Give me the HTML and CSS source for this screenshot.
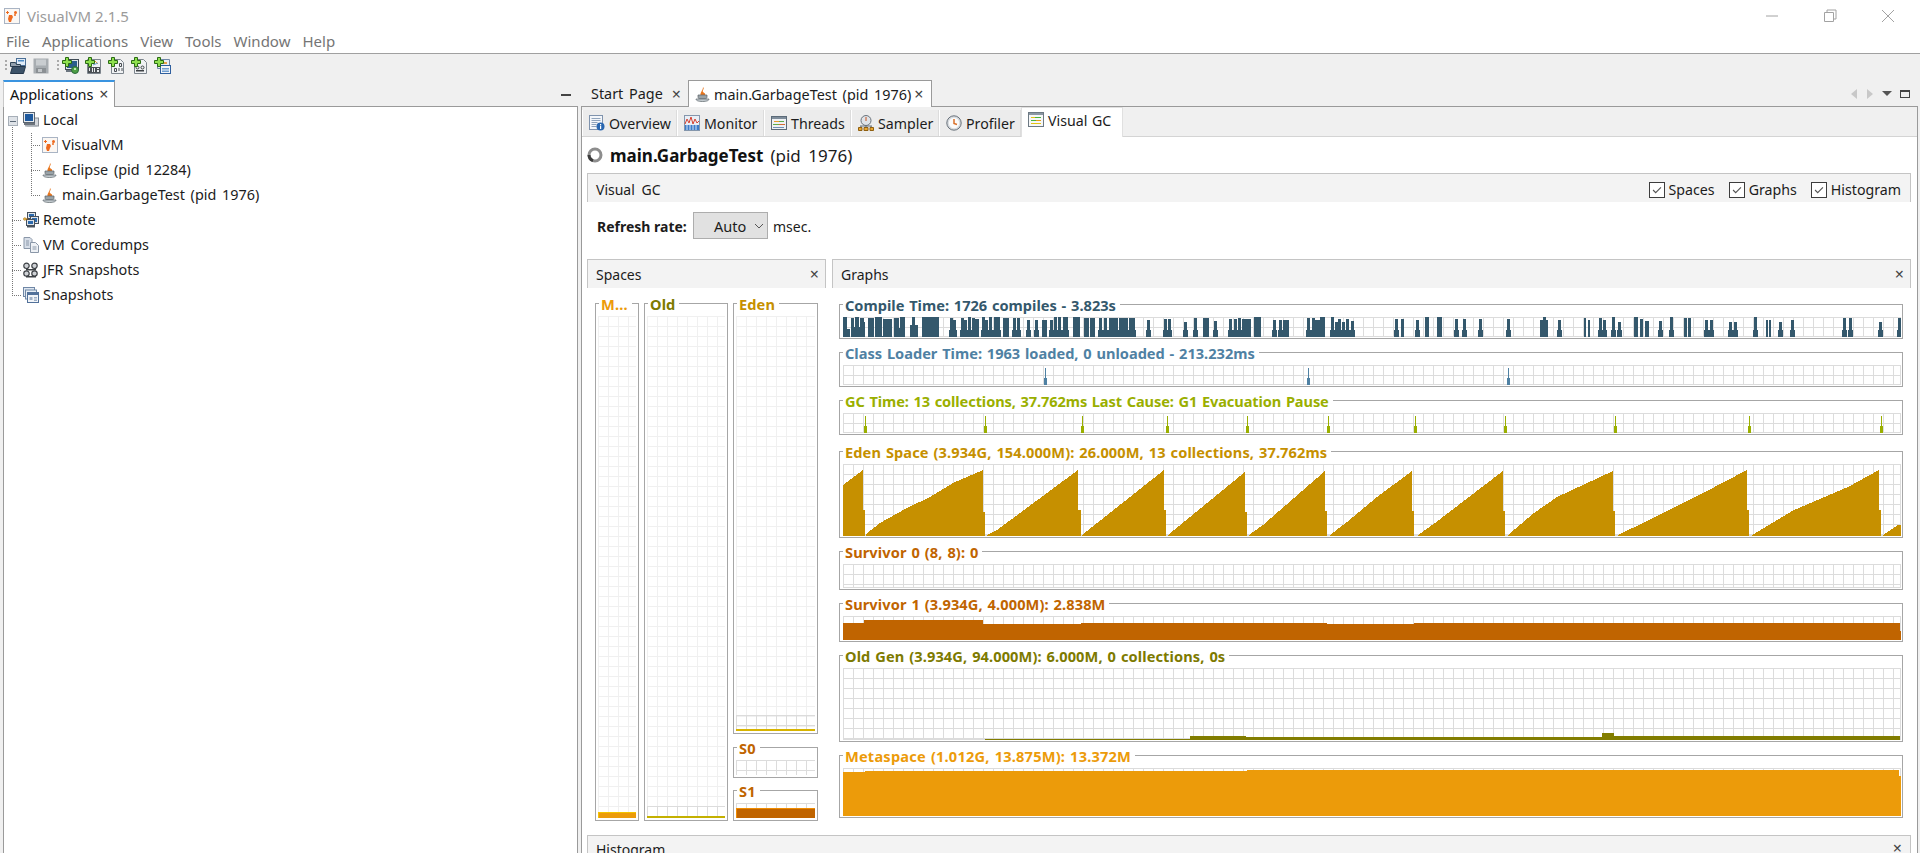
FILE: index.html
```html
<!DOCTYPE html>
<html lang="en">
<head>
<meta charset="utf-8">
<title>VisualVM 2.1.5</title>
<link rel="stylesheet" href="styles.css">
</head>
<body>
<svg class="defs" width="0" height="0" aria-hidden="true">
  <symbol id="logo" viewBox="0 0 16 16">
    <rect x=".5" y=".5" width="15" height="15" fill="#fbf7f3" stroke="#a9b4c4"/>
    <path fill="#ee6a1f" d="M5 7h3l1 2-1 2-1 3H5l-1-3zM10 4.500a1.500 1.500 0 1 1 3 0 1.500 1.500 0 0 1-3 0zM10 7a1 1 0 1 1 2 0 1 1 0 0 1-2 0zM3 3h1v1h1v1H4v1H3V5H2V4h1z"/>
  </symbol>
  <symbol id="cup" viewBox="0 0 16 16">
    <path fill="#e8761e" d="M8 1c2 2-1 3 0 5 1 1 3 1 2 4H6C4 7 8 5 8 1z"/>
    <path fill="#9aa3a8" stroke="#5d666c" stroke-width=".7" d="M3 9h9v2c0 1-1 2-2 2H5c-1 0-2-1-2-2z"/>
    <path fill="#c4cbd0" stroke="#5d666c" stroke-width=".7" d="M1 13h13c0 1.500-2 2.500-6.500 2.500S1 14.500 1 13z"/>
  </symbol>
  <symbol id="computer" viewBox="0 0 16 16">
    <rect x="4" y="6" width="11.500" height="8" fill="#d5d8dc" stroke="#8a8f96"/>
    <rect x=".5" y=".5" width="11" height="10" fill="#e6eaee" stroke="#5a6470"/>
    <rect x="2" y="2" width="8" height="7" fill="#1f5a9e"/>
    <path fill="#6d747c" d="M1 11h11v2H1z"/>
    <path fill="#a9afb6" d="M2 13h12v1.500H2z"/>
  </symbol>
  <symbol id="remote" viewBox="0 0 16 16">
    <rect x="4.500" y=".5" width="8" height="6" fill="#dfe4e9" stroke="#45505c"/>
    <rect x="6" y="2" width="5" height="3" fill="#2c6aae"/>
    <rect x="7.500" y="4.500" width="8" height="7" fill="#dfe4e9" stroke="#45505c"/>
    <rect x="9" y="6" width="5" height="4" fill="#2c6aae"/>
    <rect x="3.500" y="7.500" width="8" height="6" fill="#dfe4e9" stroke="#45505c"/>
    <rect x="5" y="9" width="5" height="3" fill="#2c6aae"/>
    <path fill="#4a545e" d="M4 14h8v1.500H4z"/>
    <circle cx="1.800" cy="7" r="1.300" fill="#f1c24c" stroke="#a56b12" stroke-width=".6"/>
    <path stroke="#a56b12" d="M3 7h2" fill="none"/>
  </symbol>
  <symbol id="dump" viewBox="0 0 16 16">
    <path fill="#d7dee8" stroke="#8a97a8" d="M1 .5h6l2 2v9H1z"/>
    <path fill="#eef1f5" stroke="#8a97a8" d="M7.500 5.500h5l3 3v7h-8z"/>
    <path stroke="#8a97a8" fill="none" d="M3 4h3M3 6h3M3 8h3M9.500 10h4M9.500 12h4"/>
  </symbol>
  <symbol id="jfr" viewBox="0 0 16 16">
    <g fill="#cfd2d6" stroke="#3d4145" stroke-width="1.200">
      <circle cx="3.500" cy="3.800" r="2.700"/><circle cx="11.500" cy="3.800" r="2.700"/>
      <circle cx="3.500" cy="11.500" r="2.700"/><circle cx="11.500" cy="11.500" r="2.700"/>
    </g>
    <path fill="#3d4145" d="M3 7h10v1.500H3zM3 14h10v1.500H3z"/>
  </symbol>
  <symbol id="snap" viewBox="0 0 16 16">
    <rect x=".5" y=".5" width="11" height="9" fill="#dfe7f1" stroke="#6f87a6"/>
    <rect x="2.500" y="3" width="11" height="9" fill="#e8eef5" stroke="#6f87a6"/>
    <rect x="4.500" y="5.500" width="11" height="10" fill="#f2f5f9" stroke="#52719a"/>
    <path fill="#52719a" d="M5 6h10v2H5z"/>
    <path fill="#9fb0c6" d="M6.500 10h3v3h-3zM11 10h3v1.500h-3zM11 12.500h3V14h-3z"/>
  </symbol>
  <symbol id="open" viewBox="0 0 16 16">
    <rect x="6.500" y=".5" width="9" height="7" fill="#dfeaf6" stroke="#4b6f96"/>
    <path fill="#4b8ac4" d="M8 2h6v1.500H8z"/>
    <path fill="#93a0ad" stroke="#2f4456" d="M.5 4.500h5l1 2h4v2H.5z"/>
    <path fill="#3c5268" stroke="#24364a" d="M.5 15.500l2-7h13l-2 7z"/>
  </symbol>
  <symbol id="save" viewBox="0 0 16 16">
    <path fill="#a8adb1" d="M.5.500h15v15H.500z"/>
    <path fill="#c9cdd0" d="M3 1.500h10v6H3z"/>
    <path fill="#8b9094" d="M3 10h10v5H3z"/>
    <path fill="#c4c8cb" d="M5 11h4v3H5z"/>
  </symbol>
  <symbol id="plus" viewBox="0 0 16 16">
    <path fill="#8fe04e" stroke="#2a6b14" d="M3.500.5h3v3h3v3h-3v3h-3v-3H.5v-3h3z"/>
  </symbol>
  <symbol id="a-remote" viewBox="0 0 16 16">
    <rect x="2.500" y="1.500" width="13" height="10" fill="#dfe4e9" stroke="#3f4a55"/>
    <rect x="4" y="3" width="10" height="7" fill="#2b5d8c"/>
    <path fill="#6c7680" d="M3 12h12v2H3z"/>
    <circle cx="12" cy="12" r="3.500" fill="#4d9e45" stroke="#2c6a3c"/>
    <path fill="#bfe3b4" d="M11 10h2v2h-2z"/>
  </symbol>
  <symbol id="a-jmx" viewBox="0 0 16 16">
    <path fill="#f0f2f4" stroke="#7d858d" d="M1.500 1.500h13v14h-13z"/>
    <path stroke="#e89a2c" d="M9 3l3 3" fill="none"/>
    <path stroke="#6f9ed0" d="M7 7l5-2" fill="none"/>
    <path fill="#4a4f54" d="M2 9h12v6H2z"/>
    <path fill="#e9ebed" d="M3 10h1v3H3zM6 10h1v4H6zM8 10h1v4H8zM11 10h2v1h-2zM11 12h2v2h-2z"/>
  </symbol>
  <symbol id="a-bin" viewBox="0 0 16 16">
    <path fill="#f0f2f4" stroke="#7d858d" d="M2.500 1.500h9l3 3v11h-12z"/>
    <path fill="none" stroke="#4a4f54" d="M10.500 5.500h2v3h-2zM13 10v3M5.500 10.500h2v3h-2zM10 10v3"/>
  </symbol>
  <symbol id="a-jfr" viewBox="0 0 16 16">
    <path fill="#f0f2f4" stroke="#7d858d" d="M2.500 1.500h9l3 3v11h-12z"/>
    <g fill="none" stroke="#3d4145"><circle cx="5.500" cy="9.500" r="1.500"/><circle cx="10.500" cy="9.500" r="1.500"/></g>
    <path fill="#3d4145" d="M4 12h8v1.500H4z"/>
  </symbol>
  <symbol id="a-snap" viewBox="0 0 16 16">
    <path fill="#e8eef5" stroke="#6f87a6" d="M2.500 1.500h12v9h-12z"/>
    <path fill="#e8a04a" d="M9 4h3v2H9z"/>
    <rect x="5.500" y="7.500" width="10" height="8" fill="#f2f5f9" stroke="#2f5f9e"/>
    <path fill="#6f9ed0" d="M7 10h7v1.500H7zM7 12.500h7V14H7z"/>
  </symbol>
  <symbol id="overview" viewBox="0 0 16 16">
    <rect x=".5" y=".5" width="13" height="14" fill="#f3f6fa" stroke="#7f93ad"/>
    <path stroke="#8fa3bb" d="M2.500 3.500h9M2.500 5.500h9M2.500 7.500h6M2.500 9.500h5M2.500 11.500h5" fill="none"/>
    <circle cx="11.500" cy="11.500" r="4" fill="#2a67b0"/>
    <path fill="#fff" d="M11 9h1.200v1.200H11zM11 10.800h1.200V14H11z"/>
  </symbol>
  <symbol id="monitor" viewBox="0 0 16 16">
    <rect x=".5" y=".5" width="15" height="15" fill="#e9eef5" stroke="#8496ac"/>
    <path fill="none" stroke="#d43f2f" d="M1 9l2-5 2 4 2-6 2 7 2-5 2 4 2-2"/>
    <path fill="#3d7cc9" d="M1 10h14v5H1z"/>
    <path stroke="#d7e5f6" d="M3 10v5M6 10v5M9 10v5M12 10v5"/>
  </symbol>
  <symbol id="threads" viewBox="0 0 16 16">
    <rect x=".5" y="1.500" width="15" height="13" fill="#eef1f4" stroke="#5b6a78"/>
    <path fill="#7e8c9a" d="M1 2h14v2H1z"/>
    <path stroke="#e89a2c" d="M3 6.500h5"/><path stroke="#5fae4b" d="M8 6.500h5M2 9.500h6"/><path stroke="#d66a34" d="M8 9.500h6"/><path stroke="#6f8fb6" d="M2 12.500h11"/>
  </symbol>
  <symbol id="sampler" viewBox="0 0 16 16">
    <circle cx="8" cy="5.500" r="5" fill="#dfe3e7" stroke="#69727b"/>
    <path stroke="#c8501f" d="M8 2v4"/>
    <path fill="none" stroke="#69727b" d="M3 11v1M8 10v2M13 11v1M2 11h12"/>
    <path fill="#e9a62f" stroke="#8f5f10" d="M.5 12.500h3.500v3H.5zM6 12.500h4v3H6zM12 12.500h3.500v3H12z"/>
  </symbol>
  <symbol id="profiler" viewBox="0 0 16 16">
    <circle cx="8" cy="8" r="7.200" fill="#d7dbdf" stroke="#69727b"/>
    <circle cx="8" cy="8" r="5.200" fill="#fbfbfb"/>
    <path fill="none" stroke="#d9702a" stroke-width="1.500" d="M8 4v4.500l3 1"/>
  </symbol>
  <symbol id="vgc" viewBox="0 0 16 16">
    <rect x=".5" y=".5" width="15" height="14" fill="#f6f7f8" stroke="#6d7983"/>
    <path fill="#8b97a3" d="M1 1h14v2H1z"/>
    <path stroke="#e4c213" d="M3 5.500h4"/><path stroke="#49b53c" d="M7 5.500h6M3 8.500h5"/><path stroke="#e69a16" d="M8 8.500h5"/><path stroke="#e4c213" d="M3 11.500h10"/>
  </symbol>
</svg>

<div class="app">
  <header class="titlebar">
    <svg class="ic title-ic"><use href="#logo"/></svg>
    <span class="title-text">VisualVM 2.1.5</span>
    <div class="winbtns">
      <svg class="winbtn" viewBox="0 0 14 14"><path d="M1 7h12" stroke="#a2a2a2" fill="none"/></svg>
      <svg class="winbtn" viewBox="0 0 14 14"><path d="M1.500 3.500h9v9h-9zM4 3.500V1h9v9h-2.500" stroke="#a2a2a2" fill="none"/></svg>
      <svg class="winbtn" viewBox="0 0 14 14"><path d="M1 1l12 12M13 1L1 13" stroke="#a2a2a2" fill="none"/></svg>
    </div>
  </header>
  <nav class="menubar">
    <span>File</span><span>Applications</span><span>View</span><span>Tools</span><span>Window</span><span>Help</span>
  </nav>
  <div class="toolbar">
    <i class="grip"></i>
    <svg class="ic tb-first"><use href="#open"/></svg>
    <svg class="ic tb-save"><use href="#save"/></svg>
    <i class="grip grip-mid"></i>
    <span class="add"><svg class="ic"><use href="#a-remote"/></svg><svg class="ic plus"><use href="#plus"/></svg></span>
    <span class="add"><svg class="ic"><use href="#a-jmx"/></svg><svg class="ic plus"><use href="#plus"/></svg></span>
    <span class="add"><svg class="ic"><use href="#a-bin"/></svg><svg class="ic plus"><use href="#plus"/></svg></span>
    <span class="add"><svg class="ic"><use href="#a-jfr"/></svg><svg class="ic plus"><use href="#plus"/></svg></span>
    <span class="add"><svg class="ic"><use href="#a-snap"/></svg><svg class="ic plus"><use href="#plus"/></svg></span>
  </div>

  <div class="workspace">
    <section class="left">
      <div class="tabstrip">
        <div class="apptab"><span>Applications</span><span class="x">×</span></div>
        <span class="minimize"></span>
      </div>
      <div class="leftpanel">
        <div class="tree">
          <svg class="treelines" width="40" height="200">
            <path d="M8.500 18v170M8 113.500h10M8 138.500h10M8 163.500h10M8 188.500h10M27.500 26v62M27 38.500h10M27 63.500h10M27 88.500h10" stroke="#777" stroke-dasharray="1 1" fill="none"/>
            <rect x="4.500" y="9.500" width="9" height="9" fill="#dfe3e8" stroke="#a7afb8"/>
            <path d="M6 14h6" stroke="#5c6a78"/>
          </svg>
          <div class="row"><svg class="ic"><use href="#computer"/></svg>Local</div>
          <div class="row child"><svg class="ic"><use href="#logo"/></svg>VisualVM</div>
          <div class="row child"><svg class="ic"><use href="#cup"/></svg>Eclipse (pid 12284)</div>
          <div class="row child"><svg class="ic"><use href="#cup"/></svg>main.GarbageTest (pid 1976)</div>
          <div class="row"><svg class="ic"><use href="#remote"/></svg>Remote</div>
          <div class="row"><svg class="ic"><use href="#dump"/></svg>VM Coredumps</div>
          <div class="row"><svg class="ic"><use href="#jfr"/></svg>JFR Snapshots</div>
          <div class="row"><svg class="ic"><use href="#snap"/></svg>Snapshots</div>
        </div>
      </div>
    </section>

    <section class="right">
      <div class="tabstrip">
        <div class="doctab start"><span>Start Page</span><span class="x">×</span></div>
        <div class="doctab active"><svg class="ic"><use href="#cup"/></svg><span>main.GarbageTest (pid 1976)</span><span class="x">×</span></div>
        <div class="navbtns">
          <i class="tri-l"></i><i class="tri-r"></i><i class="tri-d"></i><i class="maxi"></i>
        </div>
      </div>
      <div class="rightpanel">
        <div class="subtabs">
          <div class="subtab"><svg class="ic"><use href="#overview"/></svg>Overview</div>
          <div class="subtab"><svg class="ic"><use href="#monitor"/></svg>Monitor</div>
          <div class="subtab"><svg class="ic"><use href="#threads"/></svg>Threads</div>
          <div class="subtab"><svg class="ic"><use href="#sampler"/></svg>Sampler</div>
          <div class="subtab"><svg class="ic"><use href="#profiler"/></svg>Profiler</div>
          <div class="subtab on"><svg class="ic"><use href="#vgc"/></svg>Visual GC</div>
        </div>
        <div class="content">
          <div class="heading">
            <svg class="spinner" viewBox="0 0 16 16"><circle cx="8" cy="8" r="6" fill="none" stroke="#8d8d8d" stroke-width="3"/><path d="M2 8a6 6 0 0 0 4 5.600" fill="none" stroke="#3c3c3c" stroke-width="3"/></svg>
            <strong>main.GarbageTest</strong><span class="pid">(pid 1976)</span>
          </div>
          <div class="bar vgcbar">
            <span>Visual GC</span>
            <div class="checks">
              <label class="check"><i class="box"><svg viewBox="0 0 16 16"><path d="M3.500 8l3 3 6-6" fill="none" stroke="#555" stroke-width="1.300"/></svg></i>Spaces</label>
              <label class="check"><i class="box"><svg viewBox="0 0 16 16"><path d="M3.500 8l3 3 6-6" fill="none" stroke="#555" stroke-width="1.300"/></svg></i>Graphs</label>
              <label class="check"><i class="box"><svg viewBox="0 0 16 16"><path d="M3.500 8l3 3 6-6" fill="none" stroke="#555" stroke-width="1.300"/></svg></i>Histogram</label>
            </div>
          </div>
          <div class="refresh">
            <b>Refresh rate:</b>
            <div class="combo"><span>Auto</span><svg viewBox="0 0 10 6" class="chev"><path d="M1 1l4 4 4-4" fill="none" stroke="#555"/></svg></div>
            <span>msec.</span>
          </div>
          <div class="panels">
            <div class="panel spaces">
              <div class="bar phead"><span>Spaces</span><span class="x">×</span></div>
              <div class="spacebody">
                <fieldset class="sbox metabox c-meta"><legend>M...</legend>
                  <div class="splot fill"><div class="used u-none"><div class="sbar b-meta"></div></div></div>
                </fieldset>
                <fieldset class="sbox oldbox c-old"><legend>Old</legend>
                  <div class="splot fill"><div class="used u-old"><div class="sbar b-old"></div></div></div>
                </fieldset>
                <div class="edencol">
                  <fieldset class="sbox edenbox c-eden"><legend>Eden</legend>
                    <div class="splot fill"><div class="used u-eden"><div class="sbar b-eden"></div></div></div>
                  </fieldset>
                  <fieldset class="sbox s0box c-s"><legend>S0</legend>
                    <div class="splot s0plot"><div class="used u-all"></div></div>
                  </fieldset>
                  <fieldset class="sbox s1box c-s"><legend>S1</legend>
                    <div class="splot s1plot"><div class="used u-all"><div class="sbar b-s1"></div></div></div>
                  </fieldset>
                </div>
              </div>
            </div>
            <div class="panel graphs">
              <div class="bar phead"><span>Graphs</span><span class="x">×</span></div>
              <div class="graphbody">
                <fieldset class="gbox c-compile"><legend>Compile Time: 1726 compiles - 3.823s</legend>
                  <div class="plot h20"><svg viewBox="0 0 1058 20" preserveAspectRatio="none"><path fill="#34586c" d="M0 20V0h4v12h3v8zM8 20V1h3v9h1V0h4v10h1V1h4v4h1v15zM25 20V1h6v19zM32 20V0h7v19h1V2h9v18zM51 20V1h5v10h1V0h5v20zM67 20V8h2V0h3v8h3v12zM79 20V0h17v20zM132 20V2h4v18zM160 20V1h6v19zM199 20V3h5v17zM230 20V0h7v20zM241 20V1h5v19zM247 20V1h5v19zM360 20V1h6v19zM399 20V2h9v18zM411 20V0h7v20zM440 20V3h6v17zM472 20V3h9v17zM477 20V0h5v20zM558 20V2h3v18zM582 20V0h4v20zM594 20V0h5v20zM697 20V3h3V0h3v3h2v17zM741 20V1h2v19zM745 20V3h2v17zM791 20V0h4v20zM797 20V2h3v18zM802 20V4h4v16zM841 20V1h3v19zM845 20V1h3v19zM923 20V3h2v17zM926 20V3h2v17z"/><path fill="#34586c" stroke="#34586c" stroke-width="1.600" d="M107 20v-6h1v-12h1v12h1v6zM110 20v-6h1v-10h1v10h1v6zM118 20v-6h1v-12h1v12h1v6zM121 20v-6h1v-10h1v10h1v6zM125 20v-6h1v-14h1v14h1v6zM129 20v-6h1v-12h1v12h1v6zM139 20v-6h1v-13h1v13h1v6zM142 20v-6h1v-10h1v10h1v6zM146 20v-6h1v-14h1v14h1v6zM151 20v-6h1v-13h1v13h1v6zM154 20v-6h1v-14h1v14h1v6zM170 20v-6h1v-12h1v12h1v6zM174 20v-6h1v-12h1v12h1v6zM184 20v-6h1v-10h1v10h1v6zM192 20v-6h1v-10h1v10h1v6zM207 20v-6h1v-10h1v10h1v6zM211 20v-6h1v-13h1v13h1v6zM215 20v-6h1v-13h1v13h1v6zM220 20v-6h1v-14h1v14h1v6zM222 20v-6h1v-13h1v13h1v6zM256 20v-6h1v-12h1v12h1v6zM261 20v-6h1v-12h1v12h1v6zM266 20v-6h1v-12h1v12h1v6zM269 20v-6h1v-12h1v12h1v6zM272 20v-6h1v-12h1v12h1v6zM276 20v-6h1v-12h1v12h1v6zM279 20v-6h1v-12h1v12h1v6zM282 20v-6h1v-12h1v12h1v6zM286 20v-6h1v-12h1v12h1v6zM289 20v-6h1v-12h1v12h1v6zM304 20v-6h1v-10h1v10h1v6zM321 20v-6h1v-11h1v11h1v6zM325 20v-6h1v-11h1v11h1v6zM341 20v-6h1v-8h1v8h1v6zM351 20v-6h1v-12h1v12h1v6zM371 20v-6h1v-9h1v9h1v6zM386 20v-6h1v-11h1v11h1v6zM391 20v-6h1v-11h1v11h1v6zM395 20v-6h1v-12h1v12h1v6zM430 20v-6h1v-10h1v10h1v6zM436 20v-6h1v-10h1v10h1v6zM464 20v-6h1v-12h1v12h1v6zM469 20v-6h1v-12h1v12h1v6zM488 20v-6h1v-13h1v13h1v6zM492 20v-6h1v-8h1v8h1v6zM495 20v-6h1v-11h1v11h1v6zM499 20v-6h1v-8h1v8h1v6zM503 20v-6h1v-11h1v11h1v6zM508 20v-6h1v-9h1v9h1v6zM552 20v-6h1v-11h1v11h1v6zM573 20v-6h1v-10h1v10h1v6zM612 20v-6h1v-11h1v11h1v6zM620 20v-6h1v-11h1v11h1v6zM636 20v-6h1v-11h1v11h1v6zM664 20v-6h1v-11h1v11h1v6zM715 20v-6h1v-10h1v10h1v6zM756 20v-6h1v-12h1v12h1v6zM760 20v-6h1v-10h1v10h1v6zM769 20v-6h1v-14h1v14h1v6zM775 20v-6h1v-8h1v8h1v6zM816 20v-6h1v-9h1v9h1v6zM827 20v-6h1v-14h1v14h1v6zM862 20v-6h1v-10h1v10h1v6zM867 20v-6h1v-10h1v10h1v6zM886 20v-6h1v-8h1v8h1v6zM891 20v-6h1v-8h1v8h1v6zM911 20v-6h1v-14h1v14h1v6zM936 20v-6h1v-8h1v8h1v6zM948 20v-6h1v-10h1v10h1v6zM1000 20v-6h1v-12h1v12h1v6zM1006 20v-6h1v-12h1v12h1v6zM1036 20v-6h1v-8h1v8h1v6zM1055 20v-6h1v-12h1v12h1v6z"/></svg></div>
                </fieldset>
                <fieldset class="gbox c-class"><legend>Class Loader Time: 1963 loaded, 0 unloaded - 213.232ms</legend>
                  <div class="plot h20"><svg viewBox="0 0 1058 20" preserveAspectRatio="none"><path fill="#4f81a3" d="M201 20v-7h1V3h1v10h1v7zM464 20v-7h1V3h1v10h1v7zM664 20v-7h1V3h1v10h1v7z"/></svg></div>
                </fieldset>
                <fieldset class="gbox c-gc"><legend>GC Time: 13 collections, 37.762ms Last Cause: G1 Evacuation Pause</legend>
                  <div class="plot h20"><svg viewBox="0 0 1058 20" preserveAspectRatio="none"><path fill="#9aaf00" d="M21 20v-7h1V3h1v10h1v7zM141 20v-7h1V3h1v10h1v7zM238 20v-7h1V3h1v10h1v7zM323 20v-7h1V3h1v10h1v7zM403 20v-7h1V3h1v10h1v7zM484 20v-7h1V3h1v10h1v7zM571 20v-7h1V3h1v10h1v7zM661 20v-7h1V3h1v10h1v7zM771 20v-7h1V3h1v10h1v7zM905 20v-7h1V3h1v10h1v7zM1037 20v-7h1V3h1v10h1v7z"/></svg></div>
                </fieldset>
                <fieldset class="gbox edengraph c-eden"><legend>Eden Space (3.934G, 154.000M): 26.000M, 13 collections, 37.762ms</legend>
                  <div class="plot h72"><svg viewBox="0 0 1058 72" preserveAspectRatio="none"><path fill="#c69000" d="M0 72V21L20 6V46H22V72zM23 72V70L37 59 64 44 87 33 110 19 140 6V48H142V72zM144 72V71L154 66 235 6V46H238V72zM239 72V71L321 6V46H323V72zM325 72V71L402 8V48H404V72zM406 72V71L420 61 482 7V47H484V72zM487 72V71L504 58 534 33 569 7V47H571V72zM575 72V71L592 59 660 7V47H662V72zM665 72V71L691 49 714 33 770 7V47H772V72zM775 72V71L802 58 860 29 904 6V46H906V72zM909 72V71L951 46 1005 23 1036 6V46H1038V72zM1040 72V71L1055 61 1058 61V72z"/></svg></div>
                </fieldset>
                <fieldset class="gbox c-s"><legend>Survivor 0 (8, 8): 0</legend>
                  <div class="plot h24"></div>
                </fieldset>
                <fieldset class="gbox c-s"><legend>Survivor 1 (3.934G, 4.000M): 2.838M</legend>
                  <div class="plot h24"><svg viewBox="0 0 1058 24" preserveAspectRatio="none"><path fill="#c06400" d="M0 24V7H21V4H140V8H238V7H484V8H571V7H1057V15H1058V24z"/></svg></div>
                </fieldset>
                <fieldset class="gbox c-old"><legend>Old Gen (3.934G, 94.000M): 6.000M, 0 collections, 0s</legend>
                  <div class="plot h72"><svg viewBox="0 0 1058 72" preserveAspectRatio="none"><path fill="#827d00" d="M142 72V71H347V68H403V69H759V65H771V68H1057V72z"/></svg></div>
                </fieldset>
                <fieldset class="gbox c-meta"><legend>Metaspace (1.012G, 13.875M): 13.372M</legend>
                  <div class="plot h48"><svg viewBox="0 0 1058 48" preserveAspectRatio="none"><path fill="#ec9b0a" d="M0 48V4H22V3H404V2H1056V8H1058V48z"/></svg></div>
                </fieldset>
              </div>
            </div>
          </div>
          <div class="bar histo"><span>Histogram</span><span class="x">×</span></div>
        </div>
      </div>
    </section>
  </div>
</div>
</body>
</html>
```

FILE: styles.css
```css
* { box-sizing: border-box; }
html, body { margin: 0; height: 100%; overflow: hidden; background: #fff; }
body { font-family: "Noto Sans", "Open Sans", sans-serif; font-size: 14px; color: #1c1c1c; word-spacing: 2px; }
.defs { display: block; height: 0; }
.ic { width: 16px; height: 16px; flex: none; display: block; }
.x { color: #444; font-size: 16px; line-height: 1; }

.app { height: 853px; display: flex; flex-direction: column; }

.titlebar { height: 32px; display: flex; align-items: center; padding-left: 4px; }
.title-ic { margin-right: 7px; }
.title-text { color: #9b9b9b; font-size: 15px; word-spacing: 0; }
.winbtns { margin-left: auto; display: flex; gap: 44px; padding-right: 25px; }
.winbtn { width: 14px; height: 14px; display: block; }

.menubar { height: 22px; display: flex; gap: 12px; padding: 0 0 3px 6px; align-items: center; border-bottom: 1px solid #a0a0a0; color: #757575; font-size: 15px; }

.toolbar { height: 26px; background: #f0f0f0; display: flex; align-items: center; padding: 0 0 2px 5px; }
.grip { width: 2px; height: 12px; background-image: linear-gradient(#aaa 50%, transparent 50%); background-size: 2px 4px; flex: none; }
.tb-first { margin-left: 3px; }
.tb-save { margin-left: 7px; }
.grip-mid { margin-left: 8px; margin-right: 4px; }
.add { position: relative; width: 16px; height: 16px; flex: none; }
.add + .add { margin-left: 7px; }
.plus { position: absolute; left: -1px; top: -1px; }

.workspace { flex: 1; min-height: 0; display: flex; background: #f0f0f0; padding-left: 3px; }
.left { width: 575px; display: flex; flex-direction: column; }
.right { width: 1337px; margin-left: 3px; display: flex; flex-direction: column; }
.tabstrip { height: 27px; display: flex; align-items: stretch; flex: none; margin-bottom: -1px; position: relative; z-index: 1; }

.apptab { width: 112px; background: #fff; border-top: 2px solid #3a94e0; border-right: 1px solid #9a9a9a; border-left: 1px solid #c9c9c9; display: flex; align-items: center; padding: 0 0 2px 6px; gap: 6px; font-size: 14.5px; color: #111; }
.minimize { margin: 14px 7px 0 auto; width: 10px; height: 2px; background: #444; }
.leftpanel { flex: 1; background: #fff; border: 1px solid #9a9a9a; border-bottom: 0; }
.tree { position: relative; }
.treelines { position: absolute; left: 0; top: 0; shape-rendering: crispEdges; }
.row { height: 25px; display: flex; align-items: center; gap: 4px; padding-left: 19px; font-size: 14.4px; position: relative; }
.row.child { padding-left: 38px; }

.doctab { display: flex; align-items: center; font-size: 14.4px; }
.doctab.start { width: 107px; padding-left: 10px; gap: 9px; }
.doctab.active { width: 244px; padding-left: 6px; gap: 3px; background: #fff; border: 1px solid #9a9a9a; border-bottom: 0; }
.navbtns { margin-left: auto; display: flex; align-items: center; padding-right: 8px; height: 27px; }
.tri-l { width: 0; height: 0; border: 5px solid transparent; border-left: 0; border-right: 6px solid #c8c8c8; }
.tri-r { width: 0; height: 0; border: 5px solid transparent; border-right: 0; border-left: 6px solid #c8c8c8; margin-left: 10px; }
.tri-d { width: 0; height: 0; border: 5px solid transparent; border-bottom: 0; border-top: 5px solid #555; margin-left: 9px; }
.maxi { width: 10px; height: 8px; border: 1px solid #444; border-top-width: 2px; margin-left: 8px; }

.rightpanel { flex: 1; min-height: 0; background: #fff; border: 1px solid #9a9a9a; border-bottom: 0; display: flex; flex-direction: column; }
.subtabs { height: 30px; flex: none; background: #f0f0f0; border-bottom: 1px solid #d4d4d4; display: grid; grid-template-columns: 95px 87px 87px 88px 82px 102px; justify-content: start; align-items: end; }
.subtab { height: 26px; display: flex; align-items: center; gap: 4px; padding-left: 6px; background: #ececec; border-left: 1px solid #fff; border-right: 1px solid #dcdcdc; font-size: 14.2px; word-spacing: 1px; }
.subtab.on { height: 30px; background: #fff; border: 1px solid #e0e0e0; border-bottom: 0; padding-bottom: 5px; margin-bottom: -1px; }

.content { flex: 1; min-height: 0; display: flex; flex-direction: column; padding: 0 5px; overflow: hidden; }
.heading { height: 36px; display: flex; align-items: center; font-size: 17px; word-spacing: 3px; flex: none; }
.spinner { width: 16px; height: 16px; margin-right: 7px; flex: none; }
.heading strong { font-weight: 700; color: #111; }
.pid { margin-left: 7px; }

.bar { background: #f3f3f3; border: 1px solid #c4c4c4; border-bottom: 0; display: flex; align-items: center; padding-left: 8px; flex: none; }
.vgcbar { height: 29px; padding: 2px 9px 0 8px; width: 1324px; word-spacing: 3px; }
.checks { margin-left: auto; display: flex; gap: 14px; padding-top: 1px; }
.check { display: flex; align-items: center; gap: 4px; font-size: 14.2px; }
.box { width: 16px; height: 16px; border: 1px solid #3d3d3d; background: #fff; display: block; }
.box svg { display: block; width: 14px; height: 14px; }

.refresh { height: 57px; flex: none; display: flex; align-items: flex-start; padding: 10px 0 0 10px; gap: 5px; }
.refresh b { line-height: 29px; width: 91px; font-weight: 700; white-space: nowrap; word-spacing: 0; }
.refresh > span { line-height: 29px; }
.combo { width: 75px; height: 27px; background: #e1e1e1; border: 1px solid #adadad; display: flex; align-items: center; padding-left: 20px; font-size: 14.5px; }
.chev { width: 10px; height: 6px; margin-left: 8px; }

.panels { flex: none; display: flex; gap: 6px; height: 564px; }
.panel { display: flex; flex-direction: column; }
.spaces { width: 239px; }
.graphs { width: 1079px; }
.phead { height: 29px; padding-right: 6px; justify-content: space-between; }
.spacebody { flex: 1; display: flex; gap: 5px; padding: 2px 0 0 8px; min-height: 0; }
.graphbody { padding: 3px 0 0 7px; }

fieldset { margin: 0; min-width: 0; border: 1px solid #a6a6a6; padding: 0 2px 2px; }
legend { padding: 2px 4px 0 2px; margin-left: 1px; height: 26px; line-height: 24px; font-weight: 700; font-size: 14.6px; word-spacing: 1px; white-space: nowrap; overflow: hidden; }

.c-compile legend { color: #34586c; }
.c-class legend { color: #4f81a3; }
.c-gc legend { color: #9aaf00; letter-spacing: -.1px; }
.c-eden legend { color: #c69000; letter-spacing: .1px; }
.c-s legend { color: #c06400; letter-spacing: .1px; }
.c-old legend { color: #7d7a00; letter-spacing: .1px; }
.c-meta legend { color: #ec9b0a; letter-spacing: .2px; }

.sbox { display: flex; flex-direction: column; }
.metabox { width: 44px; height: 531px; }
.oldbox { width: 84px; height: 531px; }
.edencol { width: 85px; display: flex; flex-direction: column; }
.edenbox { height: 444px; }
.s0box { height: 44px; }
.s1box { height: 44px; margin-top: -1px; }
.splot { display: flex; flex-direction: column; justify-content: flex-end;
  background-image: linear-gradient(to right, #f0f0f0 1px, transparent 1px), linear-gradient(to bottom, #f0f0f0 1px, transparent 1px);
  background-size: 10px 10px; }
.fill { height: 502px; }
.edenbox .fill { height: 415px; }
.s0plot, .s1plot { height: 15px; }
.used { flex: none; display: flex; flex-direction: column; justify-content: flex-end;
  background-image: linear-gradient(to right, #dcdcdc 1px, transparent 1px), linear-gradient(to bottom, #dcdcdc 1px, transparent 1px);
  background-size: 10px 10px; }
.u-none { height: 6px; background-image: none; }
.u-old { height: 12px; }
.u-eden { height: 16px; }
.u-all { height: 15px; }
.sbar { flex: none; }
.b-meta { height: 6px; background: #ec9b0a; border-top: 1px solid #f4c400; border-left: 1px solid #f4c400; }
.b-old { height: 2px; background: #c4b000; }
.b-eden { height: 2px; background: #d8b400; }
.b-s1 { height: 10px; background: #c06400; border-top: 1px solid #f08c00; border-left: 1px solid #f08c00; }

.gbox { width: 1064px; padding-bottom: 1px; }
.edengraph { margin-top: 3px; }
.plot { width: 1058px; margin-left: 1px;
  background-image:
    linear-gradient(#dcdcdc, #dcdcdc), linear-gradient(#dcdcdc, #dcdcdc),
    linear-gradient(to right, #dcdcdc 1px, transparent 1px), linear-gradient(to bottom, #dcdcdc 1px, transparent 1px);
  background-size: 100% 1px, 1px 100%, 10px 10px, 10px 10px;
  background-position: 0 100%, 100% 0, 0 0, 0 0;
  background-repeat: no-repeat, no-repeat, repeat, repeat; }
.plot svg { display: block; width: 100%; height: 100%; shape-rendering: crispEdges; }
.h20 { height: 20px; }
.h24 { height: 24px; }
.h48 { height: 48px; }
.h72 { height: 72px; }

.histo { margin-top: 12px; height: 40px; width: 1324px; align-items: flex-start; padding-top: 4px; justify-content: space-between; padding-right: 8px; }
```
